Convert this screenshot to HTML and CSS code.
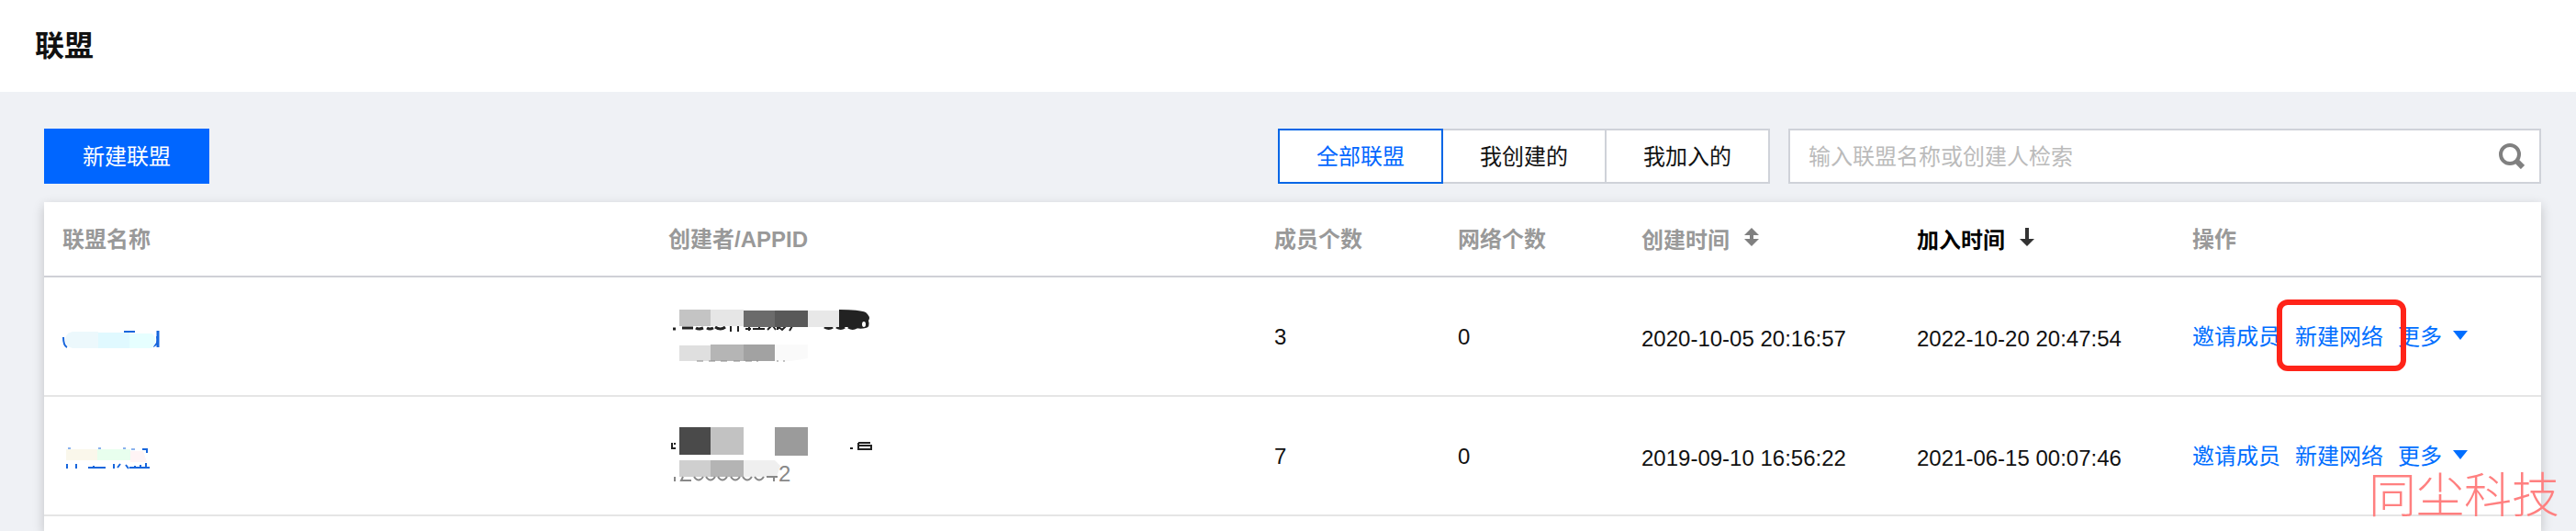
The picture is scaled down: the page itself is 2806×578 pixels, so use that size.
FILE: index.html
```html
<!DOCTYPE html>
<html lang="zh-CN">
<head>
    <meta charset="UTF-8">
    <meta name="viewport" content="width=device-width, initial-scale=1.0">
    <title>联盟</title>
    <link rel="stylesheet" href="styles.css">
</head>
<body>
    <header class="page-header">
        <h1>联盟</h1>
    </header>

    <main class="content">
        <!-- Toolbar -->
        <div class="toolbar">
            <button type="button" class="btn-primary">新建联盟</button>
            <div class="filters">
                <div class="segment">
                    <button type="button" class="segment-btn active">全部联盟</button>
                    <button type="button" class="segment-btn">我创建的</button>
                    <button type="button" class="segment-btn">我加入的</button>
                </div>
                <form class="search">
                    <input type="text" class="search-input" placeholder="输入联盟名称或创建人检索" aria-label="输入联盟名称或创建人检索">
                    <button type="submit" class="search-btn" aria-label="检索">
                        <svg width="28" height="28" viewBox="0 0 28 28">
                            <circle cx="12" cy="12" r="10" fill="none" stroke="#808080" stroke-width="4"/>
                            <path d="M19 19l7 7" stroke="#808080" stroke-width="6"/>
                        </svg>
                    </button>
                </form>
            </div>
        </div>

        <!-- Alliance list -->
        <div class="card">
            <table class="list">
                <colgroup>
                    <col>
                    <col>
                    <col class="col-count">
                    <col class="col-count">
                    <col class="col-time">
                    <col class="col-time">
                    <col class="col-action">
                </colgroup>
                <thead>
                    <tr>
                        <th>联盟名称</th>
                        <th>创建者/APPID</th>
                        <th>成员个数</th>
                        <th>网络个数</th>
                        <th>
                            <button type="button" class="sort">创建时间
                                <svg width="16" height="20" viewBox="0 0 16 20">
                                    <path d="M8 0l8 8h-6v4h6l-8 8-8-8h6V8H0z" fill="#808080"/>
                                </svg>
                            </button>
                        </th>
                        <th>
                            <button type="button" class="sort sorted">加入时间
                                <svg width="16" height="20" viewBox="0 0 16 20">
                                    <path d="M6 0h4v12h6l-8 8-8-8h6z" fill="#333"/>
                                </svg>
                            </button>
                        </th>
                        <th>操作</th>
                    </tr>
                </thead>
                <tbody>
                    <tr>
                        <td>
                            <a href="#" class="name">
                                <svg width="120" height="32" viewBox="0 0 120 32">
                                    <path d="M1 16q0 9 4 11M67 10h12M99 26q6-2 4-11" fill="none" stroke="#1766dc" stroke-width="2"/>
                                    <path d="M104 9v18" stroke="#1766dc" stroke-width="3"/>
                                    <path d="M11 10h28v18H11q-8-2-8-9t8-9z" fill="#ecf8fc"/>
                                    <path d="M39 11h34v17H39z" fill="#e0f9ff"/>
                                    <path d="M73 12h24q4 2 4 8t-4 8H73z" fill="#e6ffff"/>
                                </svg>
                            </a>
                        </td>
                        <td>
                            <svg class="creator" width="230" height="64" viewBox="0 0 230 64">
                                <path d="M5 23h3M15 22h12M30 22q3 2 8 0M42 22q3 2 7 0M51 21q6 4 11 0" fill="none" stroke="#222" stroke-width="3"/>
                                <path d="M68 20v6M76 20v6M84 23h6M88 20v5M92 23h13M99 20v3M108 24l4-4M114 20l3 4M119 24v-4l5 4 4-4M132 25l3-5" fill="none" stroke="#222" stroke-width="2"/>
                                <path d="M170 21q5 3 9 0M183 21q5 3 9 0M196 21q5 3 9 0" fill="none" stroke="#222" stroke-width="3"/>
                                <path d="M12 2h34v18H12z" fill="#c4c4c4"/>
                                <path d="M46 2h36v18H46z" fill="#e6e6e6"/>
                                <path d="M82 3h34v18H82z" fill="#6b6b6b"/>
                                <path d="M116 3h36v18h-36z" fill="#595959"/>
                                <path d="M152 3h34v18h-34z" fill="#e8e8e8"/>
                                <path d="M186 2q22 0 29 3 6 5 3 9 2 7-3 8-7 2-14-1h-15z" fill="#222"/>
                                <ellipse cx="213" cy="18" rx="2" ry="3" fill="#fff"/>
                                <path d="M12 41h34v17H12z" fill="#dfdfdf"/>
                                <path d="M46 40h36v18H46z" fill="#b5b5b5"/>
                                <path d="M82 40h34v18H82z" fill="#a2a2a2"/>
                                <path d="M116 40h36v15l-18 3h-18z" fill="#fafafa"/>
                                <path d="M31 58h7M44 58h7M57 58h7M71 58h7M84 58h7M96 58h2M118 58h2M125 58h2" stroke="#888" stroke-width="1"/>
                            </svg>
                        </td>
                        <td>3</td>
                        <td>0</td>
                        <td class="time">2020-10-05 20:16:57</td>
                        <td class="time">2022-10-20 20:47:54</td>
                        <td>
                            <div class="actions">
                                <a href="#">邀请成员</a>
                                <a href="#" class="marked">新建网络</a>
                                <button type="button" class="more">更多
                                    <svg width="16" height="10" viewBox="0 0 16 10"><path d="M0 0h16l-8 10z" fill="#006eff"/></svg>
                                </button>
                            </div>
                        </td>
                    </tr>
                    <tr>
                        <td>
                            <a href="#" class="name">
                                <svg width="120" height="32" viewBox="0 0 120 32">
                                    <path d="M4 8h34v12H4z" fill="#faf7eb"/>
                                    <path d="M38 8h36v12H38z" fill="#e8ffee"/>
                                    <path d="M74 10h14l4 12H74z" fill="#fff4f5"/>
                                    <path d="M6 7h3M39 7h3M66 7h3M75 8h4" fill="none" stroke="#1766dc" stroke-width="1"/>
                                    <path d="M87 8h5v4M5 24v5M15 24v5M28 28h6v-2M35 28h12M56 24v5M60 28l3-4M69 25l3 4M73 28h22M79 26v2M85 25v3M91 23v5" fill="none" stroke="#1766dc" stroke-width="2"/>
                                </svg>
                            </a>
                        </td>
                        <td>
                            <svg class="creator" width="230" height="64" viewBox="0 0 230 64">
                                <path d="M4 17v6h4M6 18h2M198 23h3M207 17v7h14v-4h-14M207 17h13" fill="none" stroke="#222" stroke-width="2"/>
                                <path d="M12 0h34v30H12z" fill="#4a4a4a"/>
                                <path d="M46 0h36v30H46z" fill="#c2c2c2"/>
                                <path d="M116 0h36v31h-36z" fill="#9b9b9b"/>
                                <path d="M12 36h34v18H12z" fill="#cfcfcf"/>
                                <path d="M46 36h36v18H46z" fill="#b4b4b4"/>
                                <path d="M82 36h34l6 6-4 12H82z" fill="#efefef"/>
                                <path d="M7 54v5M16 54q-2 4-2 4h11M28 54q5 7 10 0M41 54q5 7 10 0M54 54q5 7 10 0M68 54q5 7 10 0M81 54q5 7 10 0M94 54q5 7 10 0M107 54h12M115 54v5" fill="none" stroke="#888" stroke-width="2"/>
                                <text x="120" y="59" class="appid">2</text>
                            </svg>
                        </td>
                        <td>7</td>
                        <td>0</td>
                        <td class="time">2019-09-10 16:56:22</td>
                        <td class="time">2021-06-15 00:07:46</td>
                        <td>
                            <div class="actions">
                                <a href="#">邀请成员</a>
                                <a href="#">新建网络</a>
                                <button type="button" class="more">更多
                                    <svg width="16" height="10" viewBox="0 0 16 10"><path d="M0 0h16l-8 10z" fill="#006eff"/></svg>
                                </button>
                            </div>
                        </td>
                    </tr>
                </tbody>
            </table>
        </div>
    </main>

    <div class="watermark">同尘科技</div>
</body>
</html>
```

FILE: styles.css
```css
* {
    box-sizing: border-box;
}
body {
    display: flex;
    flex-direction: column;
    min-height: 100vh;
    margin: 0;
    background-color: #eff1f5;
    color: #111;
    font-family: "Liberation Sans", "Noto Sans CJK SC", sans-serif;
    font-size: 24px;
    line-height: 32px;
}
button, input {
    font: inherit;
    color: inherit;
}
button {
    padding: 0;
    border: none;
    background: none;
    cursor: pointer;
}
a {
    color: #006eff;
    text-decoration: none;
}
svg {
    display: block;
}

/* Header */
.page-header {
    padding: 30px 38px;
    background-color: #fff;
}
.page-header h1 {
    margin: 0;
    font-size: 32px;
    line-height: 40px;
}

/* Toolbar */
.content {
    display: flex;
    flex: 1;
    flex-direction: column;
    gap: 20px;
    padding: 40px 38px 0 48px;
}
.toolbar {
    display: flex;
    justify-content: space-between;
}
.btn-primary {
    width: 180px;
    height: 60px;
    padding-top: 2px;
    background-color: #0066ff;
    color: #fff;
}
.filters {
    display: flex;
    gap: 20px;
    width: 1376px;
}
.segment {
    display: flex;
}
.segment-btn {
    width: 180px;
    height: 60px;
    padding-top: 2px;
    border: 2px solid #cfd2d9;
    background-color: #fff;
}
.segment-btn + .segment-btn {
    margin-left: -2px;
}
.segment-btn.active {
    z-index: 1;
    border-color: #0066e6;
    color: #0066ff;
}
.search {
    display: flex;
    flex: 1;
    align-items: center;
    height: 60px;
    padding: 0 16px 0 20px;
    border: 2px solid #cfd2d9;
    background-color: #fff;
}
.search-input {
    flex: 1;
    padding: 2px 0 0;
    border: none;
    outline: none;
}
.search-input::placeholder {
    color: #bbb;
    opacity: 1;
}

/* List */
.card {
    flex: 1;
    background-color: #fff;
    box-shadow: 0 4px 12px rgba(0, 0, 0, 0.2);
}
.list {
    width: 100%;
    table-layout: fixed;
    border-collapse: separate;
    border-spacing: 0;
}
.col-count {
    width: 200px;
}
.col-time {
    width: 300px;
}
.col-action {
    width: 400px;
}
.list th, .list td {
    padding: 2px 20px 0;
    text-align: left;
    white-space: nowrap;
}
.list th {
    height: 82px;
    border-bottom: 2px solid #cfd0d6;
    color: #999;
}
.list td {
    height: 130px;
    border-bottom: 2px solid #e5e5e5;
}
.list .time {
    padding-top: 6px;
}
.sort {
    display: flex;
    align-items: center;
    gap: 16px;
    padding-top: 2px;
}
.sort svg {
    margin-bottom: 8px;
}
.sorted {
    color: #000;
}
.appid {
    fill: #888;
}
.actions {
    display: flex;
    gap: 16px;
}
.marked {
    position: relative;
}
.marked::after {
    content: "";
    position: absolute;
    top: -25px;
    right: -25px;
    bottom: -21px;
    left: -20px;
    border: 6px solid #ff2419;
    border-radius: 12px;
    pointer-events: none;
}
.more {
    display: flex;
    align-items: center;
    gap: 12px;
    color: #006eff;
}
.more svg {
    margin-bottom: 4px;
}

.watermark {
    position: fixed;
    right: 18px;
    bottom: 12px;
    color: #ff8080;
    font-family: "Noto Sans CJK SC", sans-serif;
    font-size: 52px;
    font-weight: 300;
    line-height: 60px;
    pointer-events: none;
}
```
